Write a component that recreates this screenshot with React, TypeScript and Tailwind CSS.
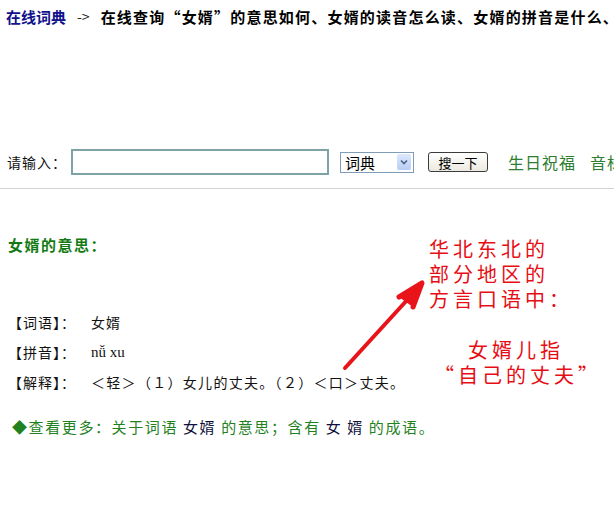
import React from 'react';

const App: React.FC = () => {
  return (
    <div className="relative w-[614px] h-[522px] overflow-hidden bg-white text-black font-['Noto_Sans_CJK_SC','Noto_Sans',sans-serif]">
      {/* Top title bar */}
      <div className="flex items-center h-[32px] pl-[6px] whitespace-nowrap text-[15px] leading-none">
        <span className="shrink-0 font-bold text-[#12128c]">在线词典</span>
        <span className="shrink-0 ml-[11px] mr-[11px] text-[14px] text-[#222]">-&gt;</span>
        <span className="shrink-0 font-bold tracking-[1.2px]">在线查询“女婿”的意思如何、女婿的读音怎么读、女婿的拼音是什么、</span>
      </div>

      {/* Search row */}
      <div className="flex items-center h-[26px] mt-[117px] pl-[7px] whitespace-nowrap">
        <span className="shrink-0 text-[14px] tracking-[1px] text-[#111]">请输入：</span>
        <div className="shrink-0 ml-[4px] w-[258px] h-[26px] border-2 border-[#7ea3a6] bg-white" />
        <div className="shrink-0 ml-[11px] flex items-center w-[74px] h-[21px] border border-[#7f9db9] bg-white">
          <span className="pl-[4px] text-[15px] leading-none flex-1">词典</span>
          <div className="mr-[2px] w-[14px] h-[16px] flex items-center justify-center rounded-[2px] bg-gradient-to-b from-[#dde8fb] to-[#b7cdf6]">
            <svg width="8" height="6" viewBox="0 0 8 6">
              <path d="M1 1.5 L4 4.5 L7 1.5" fill="none" stroke="#4d6185" strokeWidth="1.6" />
            </svg>
          </div>
        </div>
        <button className="shrink-0 ml-[14px] w-[60px] h-[20px] border border-[#3c3c3c] rounded-[3px] bg-gradient-to-b from-white to-[#ebe9df] text-[13px] leading-none text-black">
          搜一下
        </button>
        <span className="shrink-0 ml-[20px] text-[16px] tracking-[1px] text-[#2f7d2f]">生日祝福</span>
        <span className="shrink-0 ml-[14px] text-[16px] tracking-[1px] text-[#2f7d2f]">音标查询</span>
      </div>

      {/* Divider */}
      <div className="mt-[13px] border-t border-[#d2d2d2]" />

      {/* Heading */}
      <div className="mt-[46px] pl-[8px] h-[20px] flex items-center text-[15px] font-bold tracking-[1.5px] text-[#137a13]">
        女婿的意思：
      </div>

      {/* Definition rows */}
      <div className="mt-[52px] pl-[8px] text-[14px] text-[#111]">
        <div className="flex items-center h-[30px]">
          <span className="w-[83px] tracking-[1px]">【词语】：</span>
          <span className="tracking-[1px]">女婿</span>
        </div>
        <div className="flex items-center h-[30px]">
          <span className="w-[83px] tracking-[1px]">【拼音】：</span>
          <span className="font-['Liberation_Serif',serif] text-[15px]">nǚ xu</span>
        </div>
        <div className="flex items-center h-[30px]">
          <span className="w-[83px] tracking-[1px]">【解释】：</span>
          <span className="tracking-[1.3px]">＜轻＞（１）女儿的丈夫。（２）＜口＞丈夫。</span>
        </div>
      </div>

      {/* More links */}
      <div className="mt-[20px] pl-[12px] h-[20px] flex items-center whitespace-nowrap text-[15px] tracking-[1.6px] text-[#1f821f]">
        <span>◆查看更多：关于词语&nbsp;</span>
        <span className="text-[#10103a]">女婿</span>
        <span>&nbsp;的意思；含有&nbsp;</span>
        <span className="text-[#10103a]">女&nbsp;婿</span>
        <span>&nbsp;的成语。</span>
      </div>

      {/* Red annotation arrow */}
      <svg className="absolute left-0 top-0 pointer-events-none" width="614" height="522" viewBox="0 0 614 522">
        <path d="M345 368 L419 287" stroke="#e8141a" strokeWidth="4" strokeLinecap="round" fill="none" />
        <path d="M399 297 L422 283 L413 307" stroke="#e8141a" strokeWidth="5" strokeLinecap="round" strokeLinejoin="round" fill="#e8141a" />
      </svg>

      {/* Red annotation text */}
      <div className="absolute left-[429px] top-[236px] text-[20px] leading-[25px] tracking-[4px] text-[#e60d14]">
        <div className="h-[25px]">华北东北的</div>
        <div className="h-[25px]">部分地区的</div>
        <div className="h-[25px]">方言口语中：</div>
      </div>
      <div className="absolute left-[434px] top-[337px] w-[164px] text-center text-[20px] leading-[25px] tracking-[4px] text-[#e60d14]">
        <div className="h-[25px]">女婿儿指</div>
        <div className="h-[25px]">“自己的丈夫”</div>
      </div>
    </div>
  );
};

export default App;
